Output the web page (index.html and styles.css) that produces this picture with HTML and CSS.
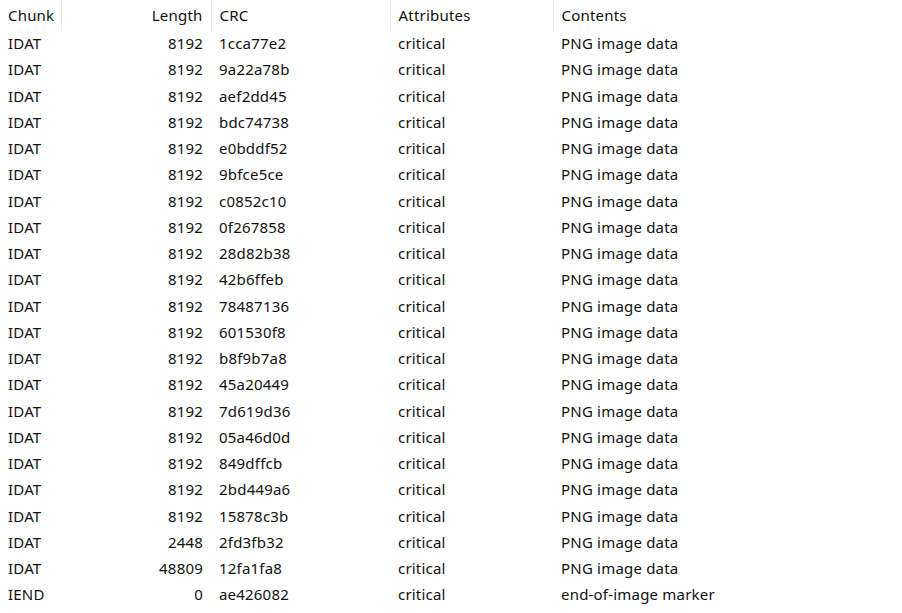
FILE: index.html
```html
<!DOCTYPE html>
<html lang="en">
<head>
  <meta charset="UTF-8">
  <title>PNG Chunks</title>
  <link rel="stylesheet" href="styles.css">
</head>
<body>
  <table class="chunks">
    <thead>
      <tr>
        <th class="col-chunk">Chunk</th>
        <th class="col-length">Length</th>
        <th class="col-crc">CRC</th>
        <th class="col-attr">Attributes</th>
        <th class="col-contents">Contents</th>
      </tr>
    </thead>
    <tbody>
      <tr><td>IDAT</td><td class="num">8192</td><td>1cca77e2</td><td>critical</td><td>PNG image data</td></tr>
      <tr><td>IDAT</td><td class="num">8192</td><td>9a22a78b</td><td>critical</td><td>PNG image data</td></tr>
      <tr><td>IDAT</td><td class="num">8192</td><td>aef2dd45</td><td>critical</td><td>PNG image data</td></tr>
      <tr><td>IDAT</td><td class="num">8192</td><td>bdc74738</td><td>critical</td><td>PNG image data</td></tr>
      <tr><td>IDAT</td><td class="num">8192</td><td>e0bddf52</td><td>critical</td><td>PNG image data</td></tr>
      <tr><td>IDAT</td><td class="num">8192</td><td>9bfce5ce</td><td>critical</td><td>PNG image data</td></tr>
      <tr><td>IDAT</td><td class="num">8192</td><td>c0852c10</td><td>critical</td><td>PNG image data</td></tr>
      <tr><td>IDAT</td><td class="num">8192</td><td>0f267858</td><td>critical</td><td>PNG image data</td></tr>
      <tr><td>IDAT</td><td class="num">8192</td><td>28d82b38</td><td>critical</td><td>PNG image data</td></tr>
      <tr><td>IDAT</td><td class="num">8192</td><td>42b6ffeb</td><td>critical</td><td>PNG image data</td></tr>
      <tr><td>IDAT</td><td class="num">8192</td><td>78487136</td><td>critical</td><td>PNG image data</td></tr>
      <tr><td>IDAT</td><td class="num">8192</td><td>601530f8</td><td>critical</td><td>PNG image data</td></tr>
      <tr><td>IDAT</td><td class="num">8192</td><td>b8f9b7a8</td><td>critical</td><td>PNG image data</td></tr>
      <tr><td>IDAT</td><td class="num">8192</td><td>45a20449</td><td>critical</td><td>PNG image data</td></tr>
      <tr><td>IDAT</td><td class="num">8192</td><td>7d619d36</td><td>critical</td><td>PNG image data</td></tr>
      <tr><td>IDAT</td><td class="num">8192</td><td>05a46d0d</td><td>critical</td><td>PNG image data</td></tr>
      <tr><td>IDAT</td><td class="num">8192</td><td>849dffcb</td><td>critical</td><td>PNG image data</td></tr>
      <tr><td>IDAT</td><td class="num">8192</td><td>2bd449a6</td><td>critical</td><td>PNG image data</td></tr>
      <tr><td>IDAT</td><td class="num">8192</td><td>15878c3b</td><td>critical</td><td>PNG image data</td></tr>
      <tr><td>IDAT</td><td class="num">2448</td><td>2fd3fb32</td><td>critical</td><td>PNG image data</td></tr>
      <tr><td>IDAT</td><td class="num">48809</td><td>12fa1fa8</td><td>critical</td><td>PNG image data</td></tr>
      <tr><td>IEND</td><td class="num">0</td><td>ae426082</td><td>critical</td><td>end-of-image marker</td></tr>
    </tbody>
  </table>
</body>
</html>
```

FILE: styles.css
```css
/* Base */
body {
  margin: 0;
  background: #fff;
  color: #111;
  font-family: "Noto Sans", "Open Sans", sans-serif;
  font-size: 15px;
  letter-spacing: 0.2px;
}

/* Chunk list */
.chunks {
  width: 902px;
  border-collapse: collapse;
  table-layout: fixed;
}

.chunks th,
.chunks td {
  box-sizing: border-box;
  padding: 0 8px 1px;
  text-align: left;
  font-weight: normal;
  white-space: nowrap;
  line-height: 1;
}

.chunks th {
  height: 31px;
  border-left: 1px solid #e8e8e8;
}

.chunks th:first-child {
  border-left: none;
}

.chunks td {
  height: 26.25px;
}

.col-chunk { width: 61px; }
.col-length { width: 150px; }
.col-crc { width: 179px; }
.col-attr { width: 163px; }

.chunks th.col-length,
.chunks td.num {
  text-align: right;
}
```
